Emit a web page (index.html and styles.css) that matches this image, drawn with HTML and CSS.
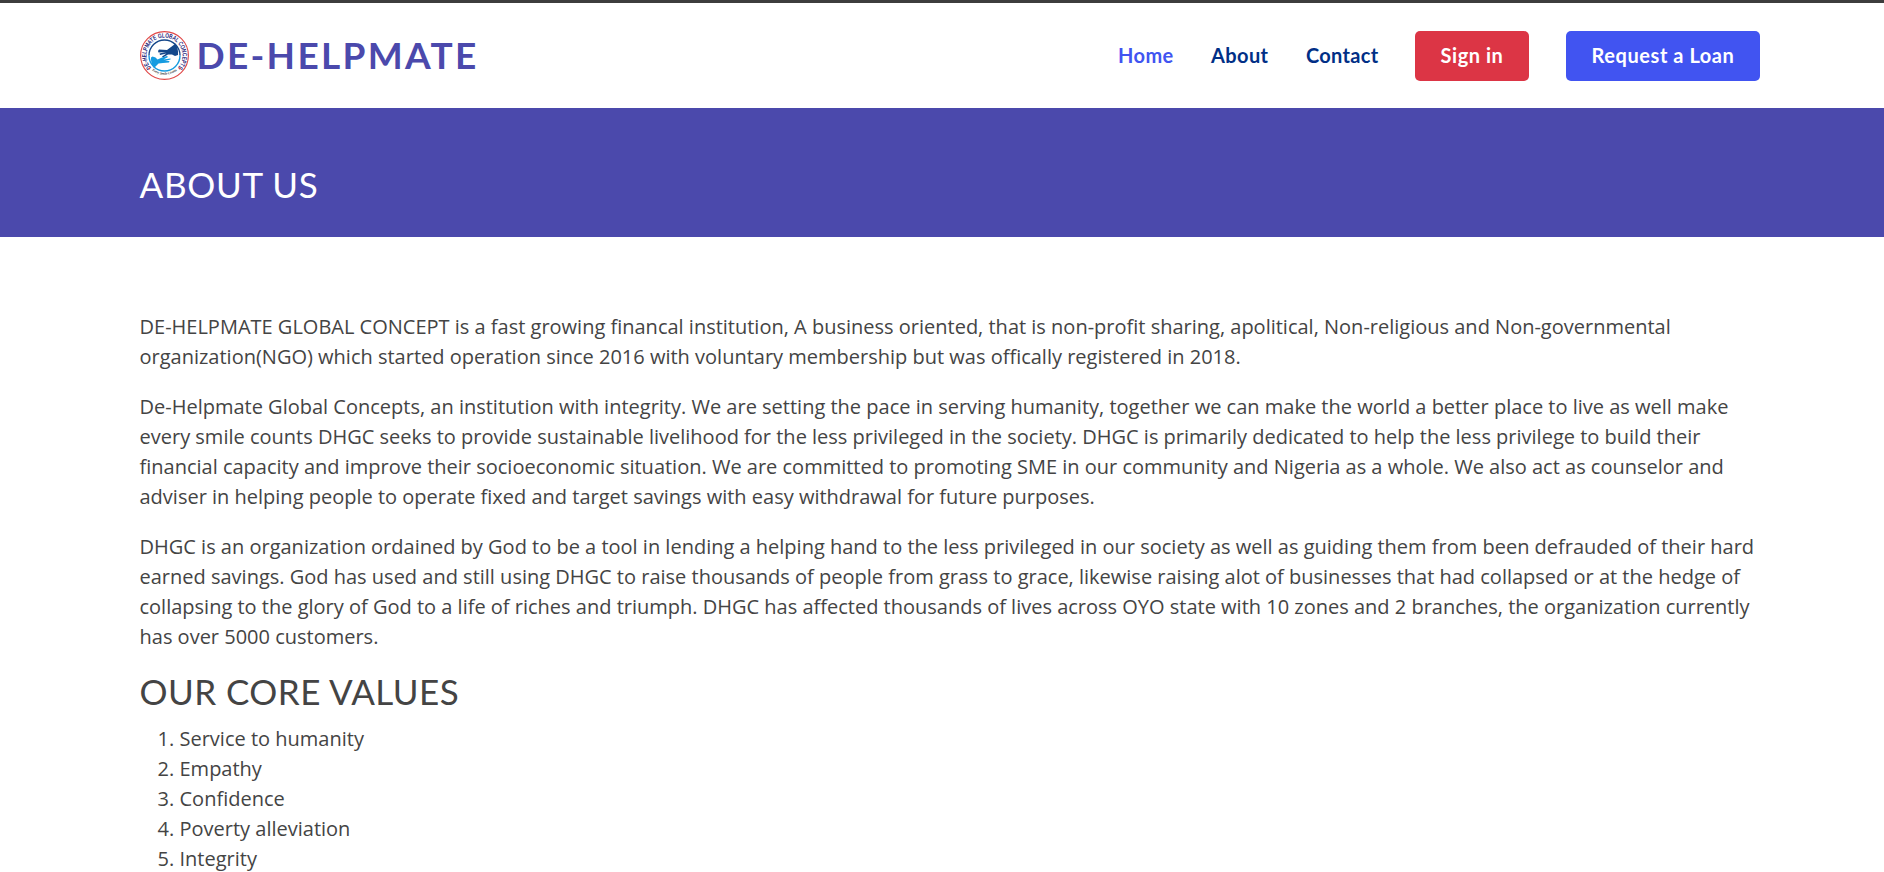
FILE: index.html
```html
<!DOCTYPE html>
<html lang="en">
<head>
<meta charset="utf-8">
<title>De-Helpmate - About Us</title>
<link rel="stylesheet" href="styles.css">
</head>
<body>
<header class="header">
  <div class="container header-row">
    <a class="brand" href="#">
      <svg class="brand-logo" viewBox="0 0 98 98" aria-hidden="true">
        <defs>
          <path id="arc-top" d="M24 75A36 36 0 1 1 74 75"/>
          <path id="arc-bottom" d="M21 76A40 40 0 0 0 77 76"/>
        </defs>
        <circle cx="49" cy="49" r="47.8" fill="#fff" stroke="#e04848" stroke-width="2.200"/>
        <text class="seal-top"><textPath href="#arc-top" startOffset="50%" textLength="166" lengthAdjust="spacingAndGlyphs">DE-HELPMATE GLOBAL CONCEPTS</textPath></text>
        <text class="seal-bottom"><textPath href="#arc-bottom" startOffset="50%" textLength="54">Every Smile Counts</textPath></text>
        <circle cx="18.500" cy="75" r="2" fill="#e04848"/>
        <circle cx="79.500" cy="75" r="2" fill="#e04848"/>
        <path d="M18 49A31 31 0 0 1 80 49" fill="none" stroke="#14478a" stroke-width="2.800"/>
        <path d="M80 49A31 31 0 0 1 18 49" fill="none" stroke="#159be0" stroke-width="2.800"/>
        <path d="M38 37L54 38L66 29L71 25Q77 35 76 48L70 50L64 47L56 47L46 53L44 51L53 45L40 48L39 45L52 42L37 43L36 40Z" fill="#14478a"/>
        <path d="M25 51L31 53L35 57L44 53L54 50L56 52L47 57L61 55L61 57L50 60L59 60L58 63L46 64L37 65L28 74Q21 64 22 53Z" fill="#159be0"/>
      </svg>
      <span class="brand-name">DE-HELPMATE</span>
    </a>
    <nav class="nav">
      <a class="link home active" href="#">Home</a>
      <a class="link about" href="#">About</a>
      <a class="link contact" href="#">Contact</a>
      <a class="button signin" href="#">Sign in</a>
      <a class="button loan" href="#">Request a Loan</a>
    </nav>
  </div>
</header>
<main>
  <section class="banner">
    <div class="container"><h2 class="title page-title">ABOUT US</h2></div>
  </section>
  <section class="container content">
    <p>DE-HELPMATE GLOBAL CONCEPT is a fast growing financal institution, A business oriented, that is non-profit sharing, apolitical, Non-religious and Non-governmental organization(NGO) which started operation since 2016 with voluntary membership but was offically registered in 2018.</p>
    <p>De-Helpmate Global Concepts, an institution with integrity. We are setting the pace in serving humanity, together we can make the world a better place to live as well make every smile counts DHGC seeks to provide sustainable livelihood for the less privileged in the society. DHGC is primarily dedicated to help the less privilege to build their financial capacity and improve their socioeconomic situation. We are committed to promoting SME in our community and Nigeria as a whole. We also act as counselor and adviser in helping people to operate fixed and target savings with easy withdrawal for future purposes.</p>
    <p>DHGC is an organization ordained by God to be a tool in lending a helping hand to the less privileged in our society as well as guiding them from been defrauded of their hard earned savings. God has used and still using DHGC to raise thousands of people from grass to grace, likewise raising alot of businesses that had collapsed or at the hedge of collapsing to the glory of God to a life of riches and triumph. DHGC has affected thousands of lives across OYO state with 10 zones and 2 branches, the organization currently has over 5000 customers.</p>
    <h2 class="title values-title">OUR CORE VALUES</h2>
    <ol class="values">
      <li>Service to humanity</li>
      <li>Empathy</li>
      <li>Confidence</li>
      <li>Poverty alleviation</li>
      <li>Integrity</li>
    </ol>
  </section>
</main>
</body>
</html>
```

FILE: styles.css
```css
* { box-sizing: border-box; }
html { overflow: hidden; }
body {
  margin: 0;
  height: 872px;
  overflow: hidden;
  background: #fff;
  border-top: 3px solid #3d3d3d;
  color: #444;
  font: 20px/30px "Open Sans", sans-serif;
}
a { text-decoration: none; }
.container { width: 1628px; margin-left: 132px; padding-left: 7.500px; }
.header { height: 105px; }
.header-row { display: flex; justify-content: space-between; padding-top: 28px; }
.brand { display: flex; height: 49px; gap: 8px; }
.brand-logo { width: 49px; height: 49px; }
.brand-name {
  color: #4b49ac;
  font: 700 37px/47px Lato, sans-serif;
  letter-spacing: 2.300px;
}
.seal-top { fill: #27277c; font: 900 13px "Liberation Sans", sans-serif; text-anchor: middle; }
.seal-bottom { fill: #333; font: italic 700 7px "Liberation Serif", serif; text-anchor: middle; }
.nav { display: flex; align-items: center; height: 50px; font: 700 20px/48px Lato, sans-serif; }
.link { height: 50px; color: #012f86; margin-right: 37px; white-space: nowrap; }
.active { color: #4154f1; }
.home { width: 56px; letter-spacing: 0.400px; }
.about { width: 58px; letter-spacing: 0.400px; }
.contact { width: 72px; letter-spacing: 0.300px; }
.button { height: 50px; border-radius: 5px; color: #fff; text-align: center; white-space: nowrap; letter-spacing: 0.550px; }
.signin { width: 114px; background: #dc3545; margin-right: 37px; }
.loan { width: 194px; background: #4154f1; }
.banner { height: 129px; padding-top: 55px; background: #4b49ac; color: #fff; }
.title { margin: 0; font: 400 35px/42px Lato, sans-serif; }
.page-title { letter-spacing: 0.700px; }
.content { padding-top: 75px; }
.content p { margin: 0 0 20px; }
.values-title { margin: -2px 0 12px; letter-spacing: 0.450px; }
.values { margin: 0; padding-left: 40px; }
```
